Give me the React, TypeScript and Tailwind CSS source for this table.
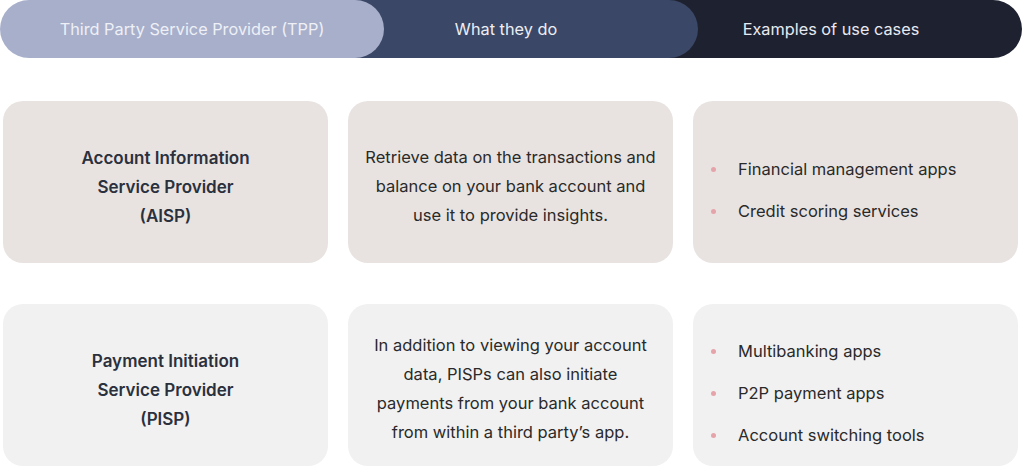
type Row = {
  title: string[]
  body: string[]
  uses: string[]
  tone: string
}

const ROWS: Row[] = [
  {
    title: ['Account Information', 'Service Provider', '(AISP)'],
    body: ['Retrieve data on the transactions and', 'balance on your bank account and', 'use it to provide insights.'],
    uses: ['Financial management apps', 'Credit scoring services'],
    tone: 'bg-[#e8e3e1]',
  },
  {
    title: ['Payment Initiation', 'Service Provider', '(PISP)'],
    body: [
      'In addition to viewing your account',
      'data, PISPs can also initiate',
      'payments from your bank account',
      'from within a third party\u2019s app.',
    ],
    uses: ['Multibanking apps', 'P2P payment apps', 'Account switching tools'],
    tone: 'bg-[#f1f1f1]',
  },
]

function Header() {
  return (
    <div className="flex h-[58px] w-[1022px] text-[16.3px]">
      <div className="relative z-30 flex h-full w-[384px] shrink-0 items-center justify-center rounded-full bg-[#a7afcb] pt-px text-[#eef0f6]">
        Third Party Service Provider (TPP)
      </div>
      <div className="relative z-20 -ml-[70px] flex h-full w-[384px] shrink-0 items-center justify-center rounded-r-full bg-[#3b4766] pt-px text-[#eceef4]">
        What they do
      </div>
      <div className="relative z-10 -ml-[58px] flex h-full w-[382px] shrink-0 items-center justify-center rounded-r-full bg-[#1e2230] pt-px text-[#e8eaf0]">
        Examples of use cases
      </div>
    </div>
  )
}

export default function App() {
  return (
    <div
      className="h-[471px] w-[1024px] overflow-hidden bg-white"
      style={{ fontFamily: 'Inter, "Open Sans", sans-serif' }}
    >
      <Header />
      <div className="mt-[43px] grid grid-cols-[325px_325px_325px] gap-x-5 gap-y-[41px] px-[3px]">
        {ROWS.map((row) => (
          <>
            <div
              key={row.title[0]}
              className={`flex h-[162px] flex-col items-center justify-center rounded-[20px] pt-[10px] text-center text-[17px] leading-[29px] font-semibold text-[#2b303d] ${row.tone}`}
            >
              {row.title.map((t) => (
                <div key={t}>{t}</div>
              ))}
            </div>
            <div
              key={row.body[0]}
              className={`flex h-[162px] flex-col items-center justify-center rounded-[20px] pt-2 text-center text-[16.5px] leading-[29px] text-[#2a2a2a] ${row.tone}`}
            >
              {row.body.map((t) => (
                <div key={t}>{t}</div>
              ))}
            </div>
            <div
              key={row.uses[0]}
              className={`flex h-[162px] flex-col justify-center gap-[18px] rounded-[20px] pt-4 pl-[18px] text-[16.5px] leading-6 text-[#2a2a2a] ${row.tone}`}
            >
              {row.uses.map((u) => (
                <div key={u} className="flex items-center">
                  <span className="h-[5px] w-[5px] rounded-full bg-[#e6a3aa]" />
                  <span className="ml-[22px]">{u}</span>
                </div>
              ))}
            </div>
          </>
        ))}
      </div>
    </div>
  )
}
